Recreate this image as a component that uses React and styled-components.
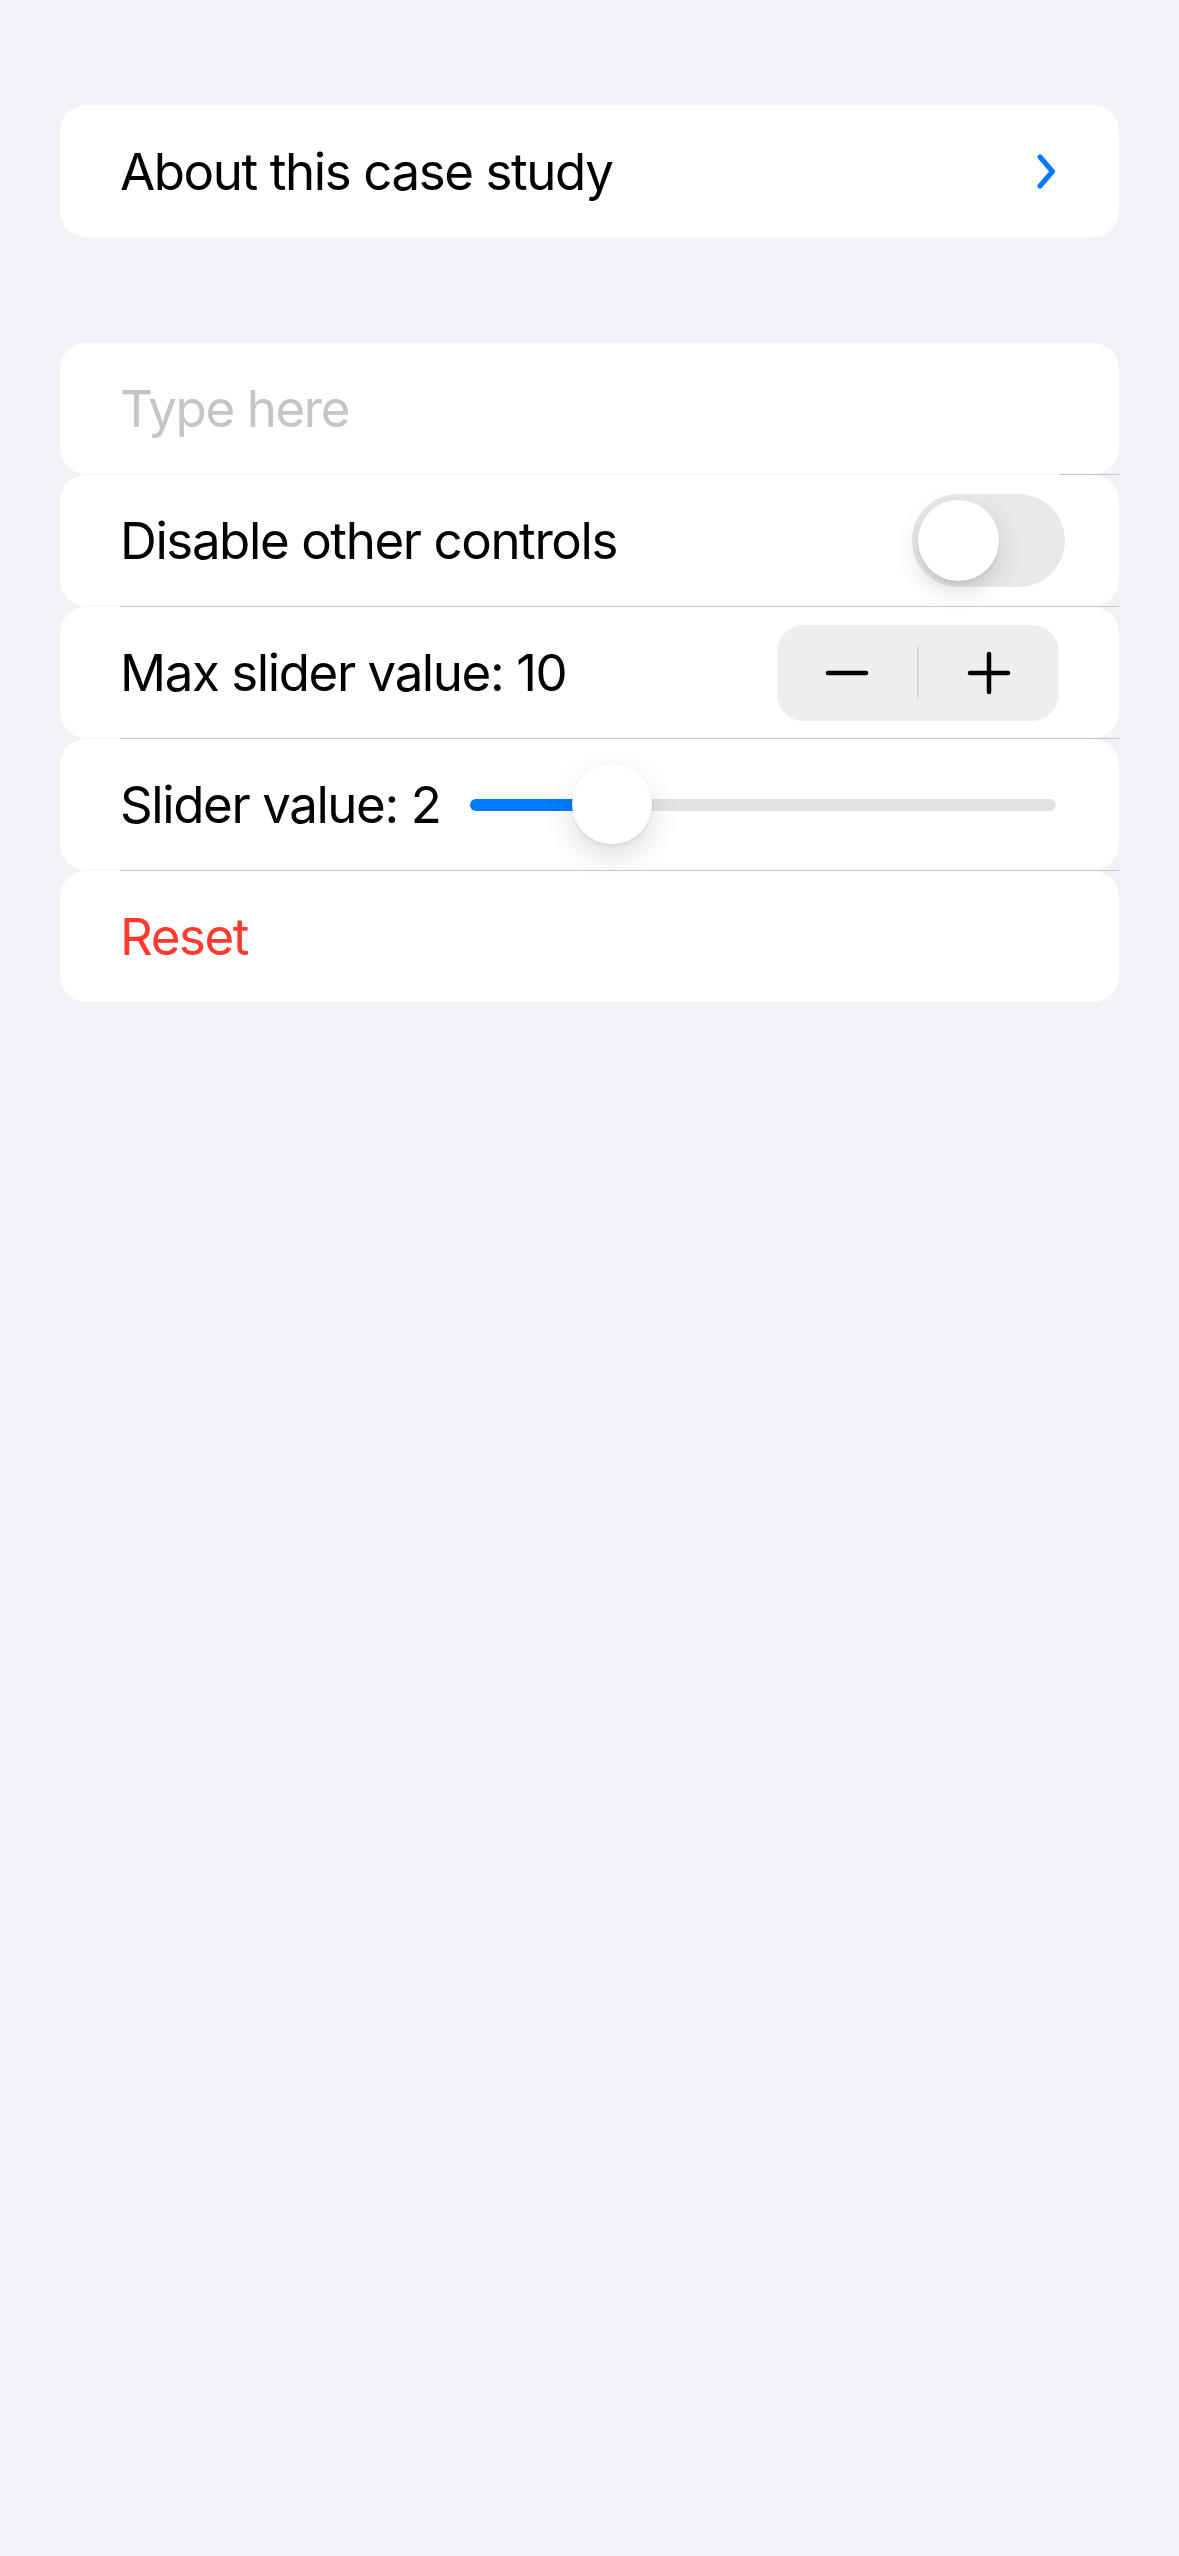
import { useState } from "react";
import styled, { createGlobalStyle } from "styled-components";

const GlobalStyle = createGlobalStyle`
  html, body {
    margin: 0;
    padding: 0;
    background: #f2f2f7;
  }
  body {
    font-family: Inter, "Noto Sans", "Liberation Sans", sans-serif;
    -webkit-font-smoothing: antialiased;
  }
`;

const Page = styled.div`
  min-height: 2556px;
  box-sizing: border-box;
  padding: 105px 60px 0;
  background: #f2f2f7;
  display: flex;
  flex-direction: column;
  gap: 106px;
`;

const Section = styled.div`
  display: flex;
  flex-direction: column;
`;

const Row = styled.div`
  height: ${(p) => p.$height || 131}px;
  background: #fff;
  border-radius: 26px;
  display: flex;
  align-items: center;
  justify-content: space-between;
  padding: 0 60px 0 60px;
  box-sizing: border-box;
  gap: 20px;
`;

const Separator = styled.div`
  height: 1px;
  background: #c6c6c8;
  margin-left: ${(p) => p.$inset}px;
`;

const Label = styled.span`
  font-size: 51px;
  letter-spacing: -1.4px;
  color: ${(p) => p.$color || "#000"};
  white-space: nowrap;
`;

const TextField = styled.input`
  border: none;
  outline: none;
  background: transparent;
  font-family: inherit;
  font-size: 51px;
  letter-spacing: -1.4px;
  padding: 0;
  width: 100%;
  color: #000;

  &::placeholder {
    color: #c5c5c7;
  }
`;

const Chevron = styled.svg`
  width: 19px;
  height: 35px;
  flex-shrink: 0;
  margin-right: 3px;
`;

const Track = styled.div`
  width: 153px;
  height: 93px;
  border-radius: 47px;
  background: #e9e9ea;
  position: relative;
  flex-shrink: 0;
  margin-right: -6px;
`;

const Knob = styled.div`
  position: absolute;
  top: 6px;
  left: 6px;
  width: 81px;
  height: 81px;
  border-radius: 50%;
  background: #fff;
  box-shadow: 0 9px 24px rgba(0, 0, 0, 0.15), 0 3px 3px rgba(0, 0, 0, 0.06);
`;

const Stepper = styled.div`
  width: 282px;
  height: 96px;
  border-radius: 27px;
  background: #eeeeef;
  display: flex;
  align-items: center;
  flex-shrink: 0;
`;

const StepButton = styled.button`
  flex: 1;
  height: 100%;
  border: none;
  background: transparent;
  display: flex;
  align-items: center;
  justify-content: center;
  padding: 0;
`;

const StepDivider = styled.div`
  width: 2px;
  height: 53px;
  background: #d8d8da;
  border-radius: 1px;
`;

const SliderTrack = styled.div`
  flex: 1;
  height: 12px;
  border-radius: 6px;
  background: #e3e3e5;
  position: relative;
  margin-left: 10px;
  margin-right: 3px;
`;

const SliderFill = styled.div`
  position: absolute;
  left: 0;
  top: 0;
  bottom: 0;
  border-radius: 6px;
  background: #007aff;
`;

const Thumb = styled.div`
  position: absolute;
  top: 50%;
  width: 80px;
  height: 80px;
  margin-top: -41px;
  margin-left: -40px;
  border-radius: 50%;
  background: #fff;
  box-shadow: 0 12px 30px rgba(0, 0, 0, 0.14), 0 2px 4px rgba(0, 0, 0, 0.06);
`;

const SliderRow = ({ value, max }) => {
  const pct = value / max;
  return (
    <SliderTrack>
      <SliderFill style={{ width: `calc(40px + ${pct} * (100% - 80px))` }} />
      <Thumb style={{ left: `calc(40px + ${pct} * (100% - 80px))` }} />
    </SliderTrack>
  );
};

export default function App() {
  const [text, setText] = useState("");
  const [max, setMax] = useState(10);
  const [value] = useState(2);

  return (
    <>
      <GlobalStyle />
      <Page>
        <Section>
          <Row $height={132}>
            <Label>About this case study</Label>
            <Chevron viewBox="0 0 19 35">
              <path
                d="M3 3 L15.5 17.5 L3 32"
                fill="none"
                stroke="#007aff"
                strokeWidth="5"
                strokeLinecap="round"
                strokeLinejoin="round"
              />
            </Chevron>
          </Row>
        </Section>

        <Section>
          <Row>
            <TextField
              placeholder="Type here"
              value={text}
              onChange={(e) => setText(e.target.value)}
            />
          </Row>
          <Separator $inset={1000} />
          <Row>
            <Label>Disable other controls</Label>
            <Track>
              <Knob />
            </Track>
          </Row>
          <Separator $inset={60} />
          <Row>
            <Label>Max slider value: {max}</Label>
            <Stepper>
              <StepButton onClick={() => setMax(max - 1)}>
                <svg width="44" height="6" viewBox="0 0 44 6">
                  <line x1="3" y1="3" x2="41" y2="3" stroke="#000" strokeWidth="4.5" strokeLinecap="round" />
                </svg>
              </StepButton>
              <StepDivider />
              <StepButton onClick={() => setMax(max + 1)}>
                <svg width="44" height="44" viewBox="0 0 44 44">
                  <line x1="3" y1="22" x2="41" y2="22" stroke="#000" strokeWidth="4.5" strokeLinecap="round" />
                  <line x1="22" y1="3" x2="22" y2="41" stroke="#000" strokeWidth="4.5" strokeLinecap="round" />
                </svg>
              </StepButton>
            </Stepper>
          </Row>
          <Separator $inset={60} />
          <Row>
            <Label>Slider value: {value}</Label>
            <SliderRow value={value} max={max} />
          </Row>
          <Separator $inset={60} />
          <Row>
            <Label $color="#ff3b30">Reset</Label>
          </Row>
        </Section>
      </Page>
    </>
  );
}
